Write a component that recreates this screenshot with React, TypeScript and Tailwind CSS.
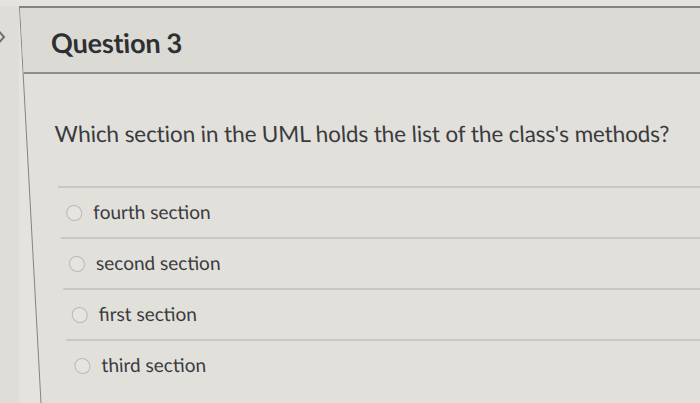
import React from "react";

const options = ["fourth section", "second section", "first section", "third section"];

export default function App() {
  return (
    <div
      className="w-[700px] h-[403px] overflow-hidden bg-[#e5e3de] flex pt-[6px]"
      style={{ fontFamily: "Lato, 'Noto Sans', sans-serif" }}
    >
      <div className="w-[19px] shrink-0 bg-[#dfddd8]">
        <svg width="19" height="60" viewBox="0 0 19 60" className="block">
          <polyline points="-3,23 4,31 -3,39" fill="none" stroke="#707070" strokeWidth="2" />
        </svg>
      </div>
      <div className="flex-1 min-w-0 origin-top-left skew-x-[3.1deg] border-l-[1.5px] border-t-2 border-[#85847f] bg-[#e2e0db] flex flex-col">
        <div className="h-[66px] shrink-0 bg-[#dcdad4] border-b-2 border-[#8e8d89] flex items-center pl-[29px]">
          <span className="text-[27px] font-bold text-[#2e2f33] tracking-[-0.2px] leading-none mt-[4px]">
            Question 3
          </span>
        </div>
        <div className="pl-[28px] pt-[46px]">
          <p className="text-[22.5px] leading-[28px] text-[#3a3b3e] tracking-[-0.1px]">
            Which section in the UML holds the list of the class's methods?
          </p>
          <div className="mt-[38px] flex flex-col">
            {options.map((o) => (
              <div
                key={o}
                className="h-[51px] border-t-2 border-[#cac8c3] flex items-center pl-[7px] gap-[11px]"
              >
                <span className="w-[16px] h-[16px] rounded-full border-[1.5px] border-[#bab9b4] bg-[#e6e4df] shrink-0" />
                <span className="text-[19px] text-[#3a3b3e] leading-none -mt-[2px]">{o}</span>
              </div>
            ))}
          </div>
        </div>
      </div>
    </div>
  );
}
